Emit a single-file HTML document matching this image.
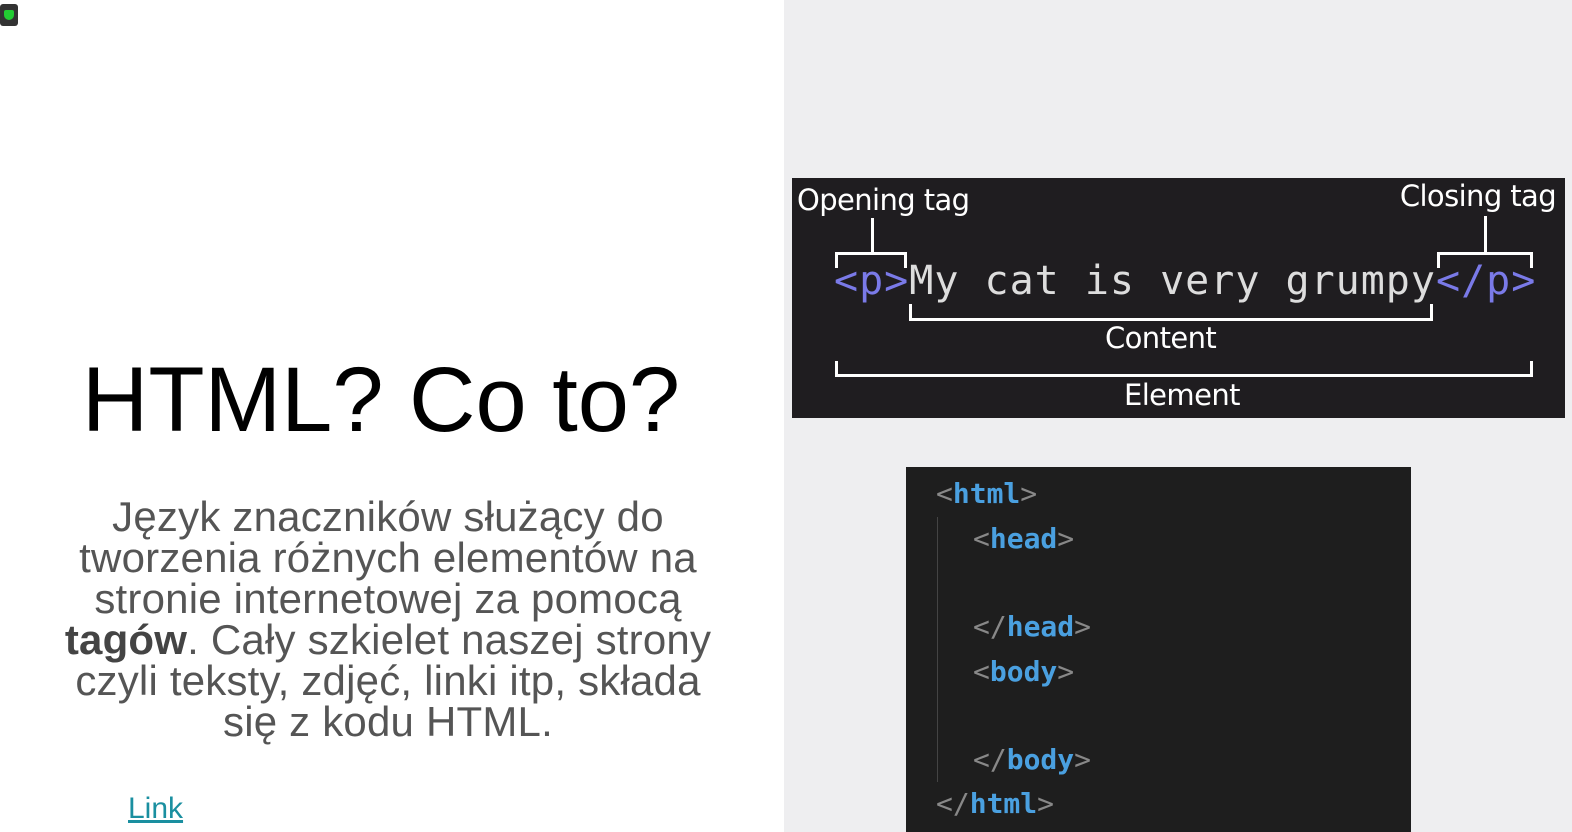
<!DOCTYPE html>
<html><head><meta charset="utf-8"><style>
html,body{margin:0;padding:0;width:1572px;height:832px;overflow:hidden;background:#eeeef0;font-family:"Liberation Sans",sans-serif}
#left{position:absolute;left:0;top:0;width:784px;height:832px;background:#fff}
h1{position:absolute;left:0;width:762px;top:345px;margin:0;font-weight:normal;font-size:92px;text-align:center;color:#000;line-height:110px}
#p{position:absolute;left:0;width:776px;top:496px;text-align:center;font-size:42px;line-height:41px;color:#555;white-space:nowrap;letter-spacing:0.2px}
#p b{color:#444}
#link{position:absolute;left:128px;top:792px;font-size:30px;color:#1a8fa0;text-decoration:underline}
#b1{position:absolute;left:792px;top:178px;width:773px;height:240px;background:#1f1d20;color:#fff}
.s{position:absolute;font-family:"DejaVu Sans",sans-serif;font-size:29px;color:#fff;letter-spacing:-0.6px;white-space:nowrap}
.m{position:absolute;font-family:"DejaVu Sans Mono","Liberation Mono",monospace;font-size:40px;top:80px;color:#ddd;white-space:nowrap;letter-spacing:1px}
.l{position:absolute;background:#fff}
#b2{position:absolute;left:906px;top:467px;width:505px;height:365px;background:#1e1e1e;font-family:"DejaVu Sans Mono",monospace;font-size:28px}
#b2 div{position:absolute;color:#4aa0e0;font-weight:bold}
#b2 span{color:#888;font-weight:normal}
</style></head><body>
<div id="left">
<div style="position:absolute;left:0;top:4px;width:18px;height:22px;background:#333;border-radius:3px"><div style="position:absolute;left:4px;top:6px;width:10px;height:10px;background:#2c3;border-radius:2px 2px 5px 5px"></div></div>
<h1>HTML? Co to?</h1>
<div id="p">Język znaczników służący do<br>tworzenia różnych elementów na<br>stronie internetowej za pomocą<br><b>tagów</b>. Cały szkielet naszej strony<br>czyli teksty, zdjęć, linki itp, składa<br>się z kodu HTML.</div>
<div id="link">Link</div>
</div>
<div id="b1">
<div class="s" style="left:5px;top:5px">Opening tag</div>
<div class="s" style="right:9px;top:1px">Closing tag</div>
<div class="l" style="left:79px;top:40px;width:3px;height:34px"></div>
<div class="l" style="left:43px;top:74px;width:72px;height:3px"></div>
<div class="l" style="left:43px;top:74px;width:3px;height:16px"></div>
<div class="l" style="left:112px;top:74px;width:3px;height:16px"></div>
<div class="l" style="left:692px;top:38px;width:3px;height:36px"></div>
<div class="l" style="left:645px;top:74px;width:96px;height:3px"></div>
<div class="l" style="left:645px;top:74px;width:3px;height:16px"></div>
<div class="l" style="left:738px;top:74px;width:3px;height:16px"></div>
<div class="m" style="left:42px"><span style="color:#7a7ae8">&lt;p&gt;</span>My cat is very grumpy<span style="color:#7a7ae8">&lt;/p&gt;</span></div>
<div class="l" style="left:117px;top:140px;width:524px;height:3px"></div>
<div class="l" style="left:117px;top:126px;width:3px;height:16px"></div>
<div class="l" style="left:638px;top:126px;width:3px;height:16px"></div>
<div class="s" style="left:313px;top:143px">Content</div>
<div class="l" style="left:43px;top:196px;width:698px;height:3px"></div>
<div class="l" style="left:43px;top:183px;width:3px;height:16px"></div>
<div class="l" style="left:738px;top:183px;width:3px;height:16px"></div>
<div class="s" style="left:332px;top:200px">Element</div>
</div>
<div id="b2">
<div style="left:30px;top:10px"><span>&lt;</span>html<span>&gt;</span></div>
<div style="left:67px;top:55px"><span>&lt;</span>head<span>&gt;</span></div>
<div style="left:67px;top:143px"><span>&lt;/</span>head<span>&gt;</span></div>
<div style="left:67px;top:188px"><span>&lt;</span>body<span>&gt;</span></div>
<div style="left:67px;top:276px"><span>&lt;/</span>body<span>&gt;</span></div>
<div style="left:30px;top:320px"><span>&lt;/</span>html<span>&gt;</span></div>
<p style="position:absolute;left:31px;top:50px;width:1px;height:265px;background:#444;margin:0"></p>
</div>
</body></html>
